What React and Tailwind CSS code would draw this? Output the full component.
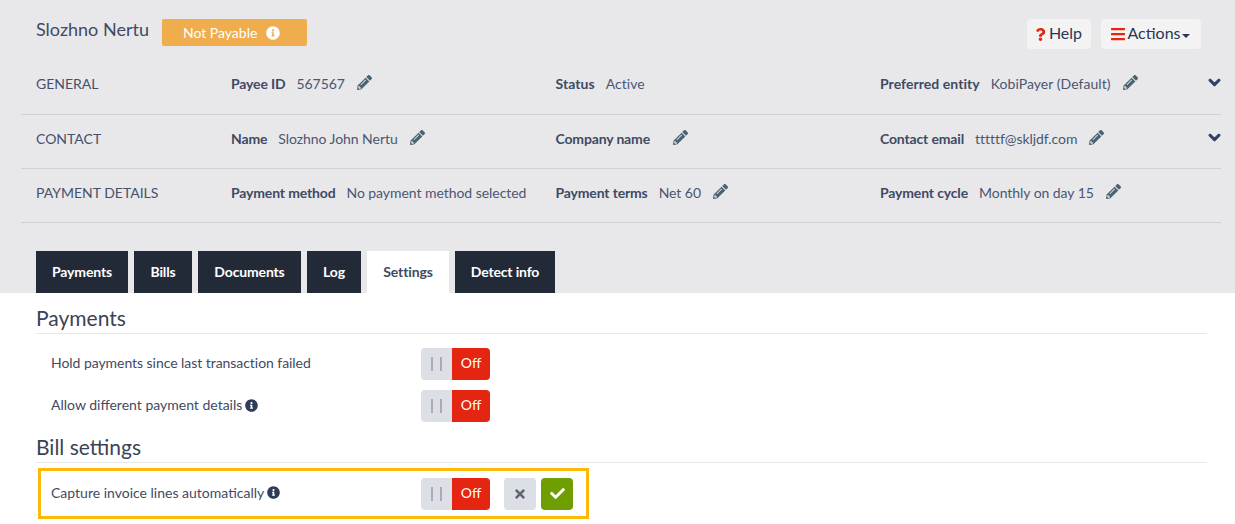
import { FaPencilAlt, FaInfoCircle, FaChevronDown, FaBars, FaQuestion, FaTimes, FaCheck } from "react-icons/fa";

const rows = [
  {
    title: "GENERAL",
    height: "h-[60px] pb-[2px]",
    chevron: true,
    cells: [
      { label: "Payee ID", value: "567567", edit: true },
      { label: "Status", value: "Active", wide: true },
      { label: "Preferred entity", value: "KobiPayer (Default)", edit: true, wide: true },
    ],
  },
  {
    title: "CONTACT",
    height: "h-[54px] pb-[6px]",
    chevron: true,
    cells: [
      { label: "Name", value: "Slozhno John Nertu", edit: true },
      { label: "Company name", value: "", edit: true },
      { label: "Contact email", value: "tttttf@skljdf.com", edit: true },
    ],
  },
  {
    title: "PAYMENT DETAILS",
    height: "h-[54px] pb-[6px]",
    cells: [
      { label: "Payment method", value: "No payment method selected" },
      { label: "Payment terms", value: "Net 60", edit: true },
      { label: "Payment cycle", value: "Monthly on day 15", edit: true },
    ],
  },
];

const tabs = [
  { name: "Payments", width: "w-[92px]" },
  { name: "Bills", width: "w-[58px]" },
  { name: "Documents", width: "w-[103px]" },
  { name: "Log", width: "w-[54px]" },
  { name: "Settings", width: "w-[82px]", active: true },
  { name: "Detect info", width: "w-[100px]" },
];

function Toggle() {
  return (
    <div className="flex h-8 w-[69px] overflow-hidden rounded-[4px] text-[14px]">
      <div className="flex w-[31px] items-center justify-center gap-[7px] bg-[#dcdfe5]">
        <span className="h-[14px] w-[2px] bg-[#a9adb3]" />
        <span className="h-[14px] w-[2px] bg-[#a9adb3]" />
      </div>
      <div className="flex flex-1 items-center justify-center bg-[#e32512] pb-[3px] text-white">Off</div>
    </div>
  );
}

function SettingRow({ label, info }) {
  return (
    <div className="flex h-8 items-center">
      <div className={`flex w-[370px] items-center gap-[3px] pb-[3px] text-[#3f4a63] ${info ? "" : "tracking-[-0.05px]"}`}>
        {label}
        {info && <FaInfoCircle className="mt-[1px] text-[13px] text-[#2f3c5a]" />}
      </div>
      <Toggle />
    </div>
  );
}

export default function App() {
  return (
    <div className="h-[524px] w-[1235px] overflow-hidden bg-white font-['Lato',sans-serif] text-[14px] text-[#3f4a63]">
      <div className="h-[293px] bg-[#e8e8eb] pl-[21px] pr-[14px]">
        <div className="flex h-[55px] items-start pl-[15px] pr-[20px] pt-[19px]">
          <div className="text-[18px] leading-[21px] text-[#3f4a63]">Slozhno Nertu</div>
          <div className="ml-[13px] flex h-[27px] w-[145px] items-center gap-[9px] rounded-[2px] bg-[#f0ad4e] pl-[21px] text-white">
            Not Payable
            <FaInfoCircle className="text-[14px]" />
          </div>
          <div className="ml-auto flex gap-[10px] text-[16px] text-[#2a3655]">
            <button className="flex h-[30px] w-[64px] items-center justify-center gap-[2px] rounded-[4px] bg-[#f3f3f4] pb-[2px] pr-[2px]">
              <FaQuestion className="mt-[2px] text-[13px] text-[#e32512]" />
              Help
            </button>
            <button className="flex h-[30px] w-[100px] items-center justify-center gap-[1px] rounded-[4px] bg-[#f3f3f4] pb-[2px] pr-[2px]">
              <FaBars className="mt-[2px] text-[16px] text-[#e32512]" />
              Actions
              <span className="mt-[5px] border-x-[4px] border-t-[4px] border-x-transparent border-t-[#2a3655]" />
            </button>
          </div>
        </div>

        {rows.map((row) => (
          <div key={row.title} className={`flex items-center border-b border-[#cfcfd4] pl-[15px] ${row.height}`}>
            <div className="w-[195px] text-[#46506a]">{row.title}</div>
            {row.cells.map((cell) => (
              <div key={cell.label} className="flex w-[324.5px] items-center">
                <span className={`font-bold text-[#3f4a63] ${cell.wide ? "tracking-[0.05px]" : "tracking-[-0.15px]"}`}>{cell.label}</span>
                <span className={`ml-[11px] text-[#4b5670] ${cell.wide ? "tracking-[0.05px]" : "tracking-[-0.05px]"}`}>{cell.value}</span>
                {cell.edit && <FaPencilAlt className="mb-[3px] ml-[12px] text-[15px] text-[#4a6572]" />}
              </div>
            ))}
            {row.chevron && (
              <FaChevronDown stroke="currentColor" strokeWidth={40} className="mb-[3px] ml-auto text-[13px] text-[#2f4067]" />
            )}
          </div>
        ))}

        <div className="mt-[28px] flex gap-[6px] pl-[15px]">
          {tabs.map((tab) => (
            <div
              key={tab.name}
              className={`flex h-[42px] items-center justify-center pb-[2px] font-bold tracking-[-0.15px] ${tab.width} ${
                tab.active ? "bg-white text-[#3f4a63]" : "bg-[#232a37] text-white"
              }`}
            >
              {tab.name}
            </div>
          ))}
        </div>
      </div>

      <div className="pl-[36px] pr-[28px]">
        <h2 className="h-[41px] border-b border-[#e8e8eb] pt-[11px] text-[21px] leading-[27px] text-[#3a4356]">Payments</h2>
        <div className="flex flex-col gap-[10px] pl-[15px] pt-[14px]">
          <SettingRow label="Hold payments since last transaction failed" />
          <SettingRow label="Allow different payment details" info />
        </div>
        <h2 className="h-[41px] border-b border-[#e8e8eb] pt-[11px] text-[21px] leading-[27px] text-[#3a4356]">Bill settings</h2>
        <div className="ml-[2px] mt-[5px] flex h-[51px] w-[551px] items-center border-[3.5px] border-[#fdb90a] pl-[10px]">
          <SettingRow label="Capture invoice lines automatically" info />
          <button className="ml-[14px] flex h-8 w-[32px] items-center justify-center rounded-[4px] bg-[#dcdfe5] text-[14px] text-[#5f6770]">
            <FaTimes />
          </button>
          <button className="ml-[5px] flex h-8 w-[32px] items-center justify-center rounded-[4px] bg-[#6f9e00] text-[15px] text-white">
            <FaCheck />
          </button>
        </div>
      </div>
    </div>
  );
}
